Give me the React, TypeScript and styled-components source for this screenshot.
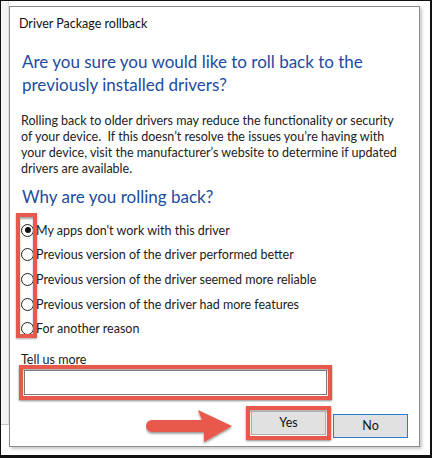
import React, { useState } from "react";
import styled, { createGlobalStyle } from "styled-components";

const GlobalStyle = createGlobalStyle`
  html, body {
    margin: 0;
    padding: 0;
    background: #ffffff;
  }
  * {
    box-sizing: border-box;
  }
`;

const reasons = [
  "My apps don't work with this driver",
  "Previous version of the driver performed better",
  "Previous version of the driver seemed more reliable",
  "Previous version of the driver had more features",
  "For another reason",
];

const RED = "#e8584b";
const FONT = `"Segoe UI", Lato, "Noto Sans", sans-serif`;

export default function App() {
  const [picked, setPicked] = useState(0);
  const [more, setMore] = useState("");

  return (
    <>
      <GlobalStyle />
      <Frame>
        <BackWindow />
        <Dialog>
          <Title>Driver Package rollback</Title>
          <Heading>
            Are you sure you would like to roll back to the
            <br />
            previously installed drivers?
          </Heading>
          <Body>
            Rolling back to older drivers may reduce the functionality or
            security
            <br />
            of your device.&nbsp; If this doesn’t resolve the issues you’re
            having with
            <br />
            your device, visit the manufacturer’s website to determine if
            updated
            <br />
            drivers are available.
          </Body>
          <SubHeading>Why are you rolling back?</SubHeading>
          <Options>
            {reasons.map((r, i) => (
              <Option key={r} onClick={() => setPicked(i)}>
                <Radio $checked={picked === i} />
                <span>{r}</span>
              </Option>
            ))}
            <ColumnMark />
          </Options>
          <Label>Tell us more</Label>
          <Mark $pad={1}>
            <TextBox
              value={more}
              onChange={({ target: { value } }) => setMore(value)}
            />
          </Mark>
          <ButtonRow>
            <Arrow width="88" height="38" viewBox="0 0 88 38">
              <defs>
                <filter id="sh" x="-10%" y="-20%" width="130%" height="150%">
                  <feDropShadow
                    dx="0"
                    dy="1.5"
                    stdDeviation="1"
                    floodColor="#000"
                    floodOpacity="0.45"
                  />
                </filter>
              </defs>
              <path
                d="M6 12 L56 12 L52 2 L86 18 L58 34 L58 24 L6 24 A6 6 0 0 1 6 12 Z"
                fill={RED}
                filter="url(#sh)"
              />
            </Arrow>
            <Mark $pad={1}>
              <Button>Yes</Button>
            </Mark>
            <Button $focused>No</Button>
          </ButtonRow>
        </Dialog>
      </Frame>
    </>
  );
}

const Frame = styled.div`
  width: 432px;
  height: 458px;
  border-style: solid;
  border-color: #111;
  border-width: 1px 2px 3px 1px;
  display: flex;
  align-items: flex-start;
  padding-top: 5px;
  overflow: hidden;
  font-family: ${FONT};
`;

const BackWindow = styled.div`
  width: 8px;
  height: 424px;
  margin-top: -5px;
  background: #f3f3f3;
  border-bottom: 1px solid #c8c8c8;
  border-right: 1px solid #e0e0e0;
  flex-shrink: 0;
`;

const Dialog = styled.div`
  width: 411px;
  height: 441px;
  background: #fff;
  border: 1px solid #8c8c8c;
  box-shadow: 2px 2px 3px rgba(0, 0, 0, 0.22);
  padding: 9px 11px 0 9px;
  display: flex;
  flex-direction: column;
  color: #1b1b1b;
`;

const Title = styled.div`
  font-size: 12.5px;
  line-height: 16px;
  color: #111;
`;

const Heading = styled.div`
  margin: 18px 0 0 3px;
  font-size: 17px;
  line-height: 23px;
  color: #1c4c9e;
  white-space: nowrap;
`;

const Body = styled.p`
  margin: 17px 0 0 2px;
  font-size: 12.5px;
  line-height: 16px;
  color: #222;
  white-space: nowrap;
`;

const SubHeading = styled(Heading)`
  margin-top: 8px;
`;

const Options = styled.div`
  position: relative;
  margin-top: 10px;
  display: flex;
  flex-direction: column;
`;

const Option = styled.label`
  display: flex;
  align-items: center;
  height: 24.6px;
  font-size: 12.5px;
  color: #1b1b1b;
  cursor: pointer;
  padding-left: 2px;
`;

const Radio = styled.span<{ $checked: boolean }>`
  width: 13px;
  height: 13px;
  border-radius: 50%;
  border: 1px solid #222;
  margin-right: 2px;
  position: relative;
  flex-shrink: 0;
  &::after {
    content: "";
    display: ${(p) => (p.$checked ? "block" : "none")};
    position: absolute;
    left: 2.5px;
    top: 2.5px;
    width: 6px;
    height: 6px;
    border-radius: 50%;
    background: #111;
  }
`;

const ColumnMark = styled.div`
  position: absolute;
  left: -3px;
  top: -5px;
  width: 21px;
  height: 125px;
  border: 4px solid ${RED};
  box-shadow: inset 0 2px 2px rgba(0, 0, 0, 0.35), 0 1px 2px rgba(0, 0, 0, 0.35);
  pointer-events: none;
`;

const Label = styled.div`
  margin: 12px 0 -2px 2px;
  font-size: 12.5px;
  line-height: 14px;
  color: #1b1b1b;
`;

const Mark = styled.div<{ $pad: number }>`
  display: inline-flex;
  align-self: flex-start;
  border: 4px solid ${RED};
  padding: ${(p) => p.$pad}px;
  box-shadow: inset 0 2px 2px rgba(0, 0, 0, 0.3), 0 1px 2px rgba(0, 0, 0, 0.45);
`;

const TextBox = styled.input`
  width: 303px;
  height: 25px;
  border: 1px solid #7a7a7a;
  background: #fff;
  outline: none;
  font-family: ${FONT};
  font-size: 12px;
  padding: 0 4px;
`;

const ButtonRow = styled.div`
  margin-top: 6px;
  display: flex;
  align-items: center;
  justify-content: flex-end;
  gap: 2px;
`;

const Arrow = styled.svg`
  margin-right: 10px;
  margin-top: 2px;
`;

const Button = styled.button<{ $focused?: boolean }>`
  width: 75px;
  height: 24px;
  background: #e1e1e1;
  border: 1px solid ${(p) => (p.$focused ? "#2c7bd4" : "#adadad")};
  font-family: ${FONT};
  font-size: 12.5px;
  color: #111;
  padding: 0;
`;
